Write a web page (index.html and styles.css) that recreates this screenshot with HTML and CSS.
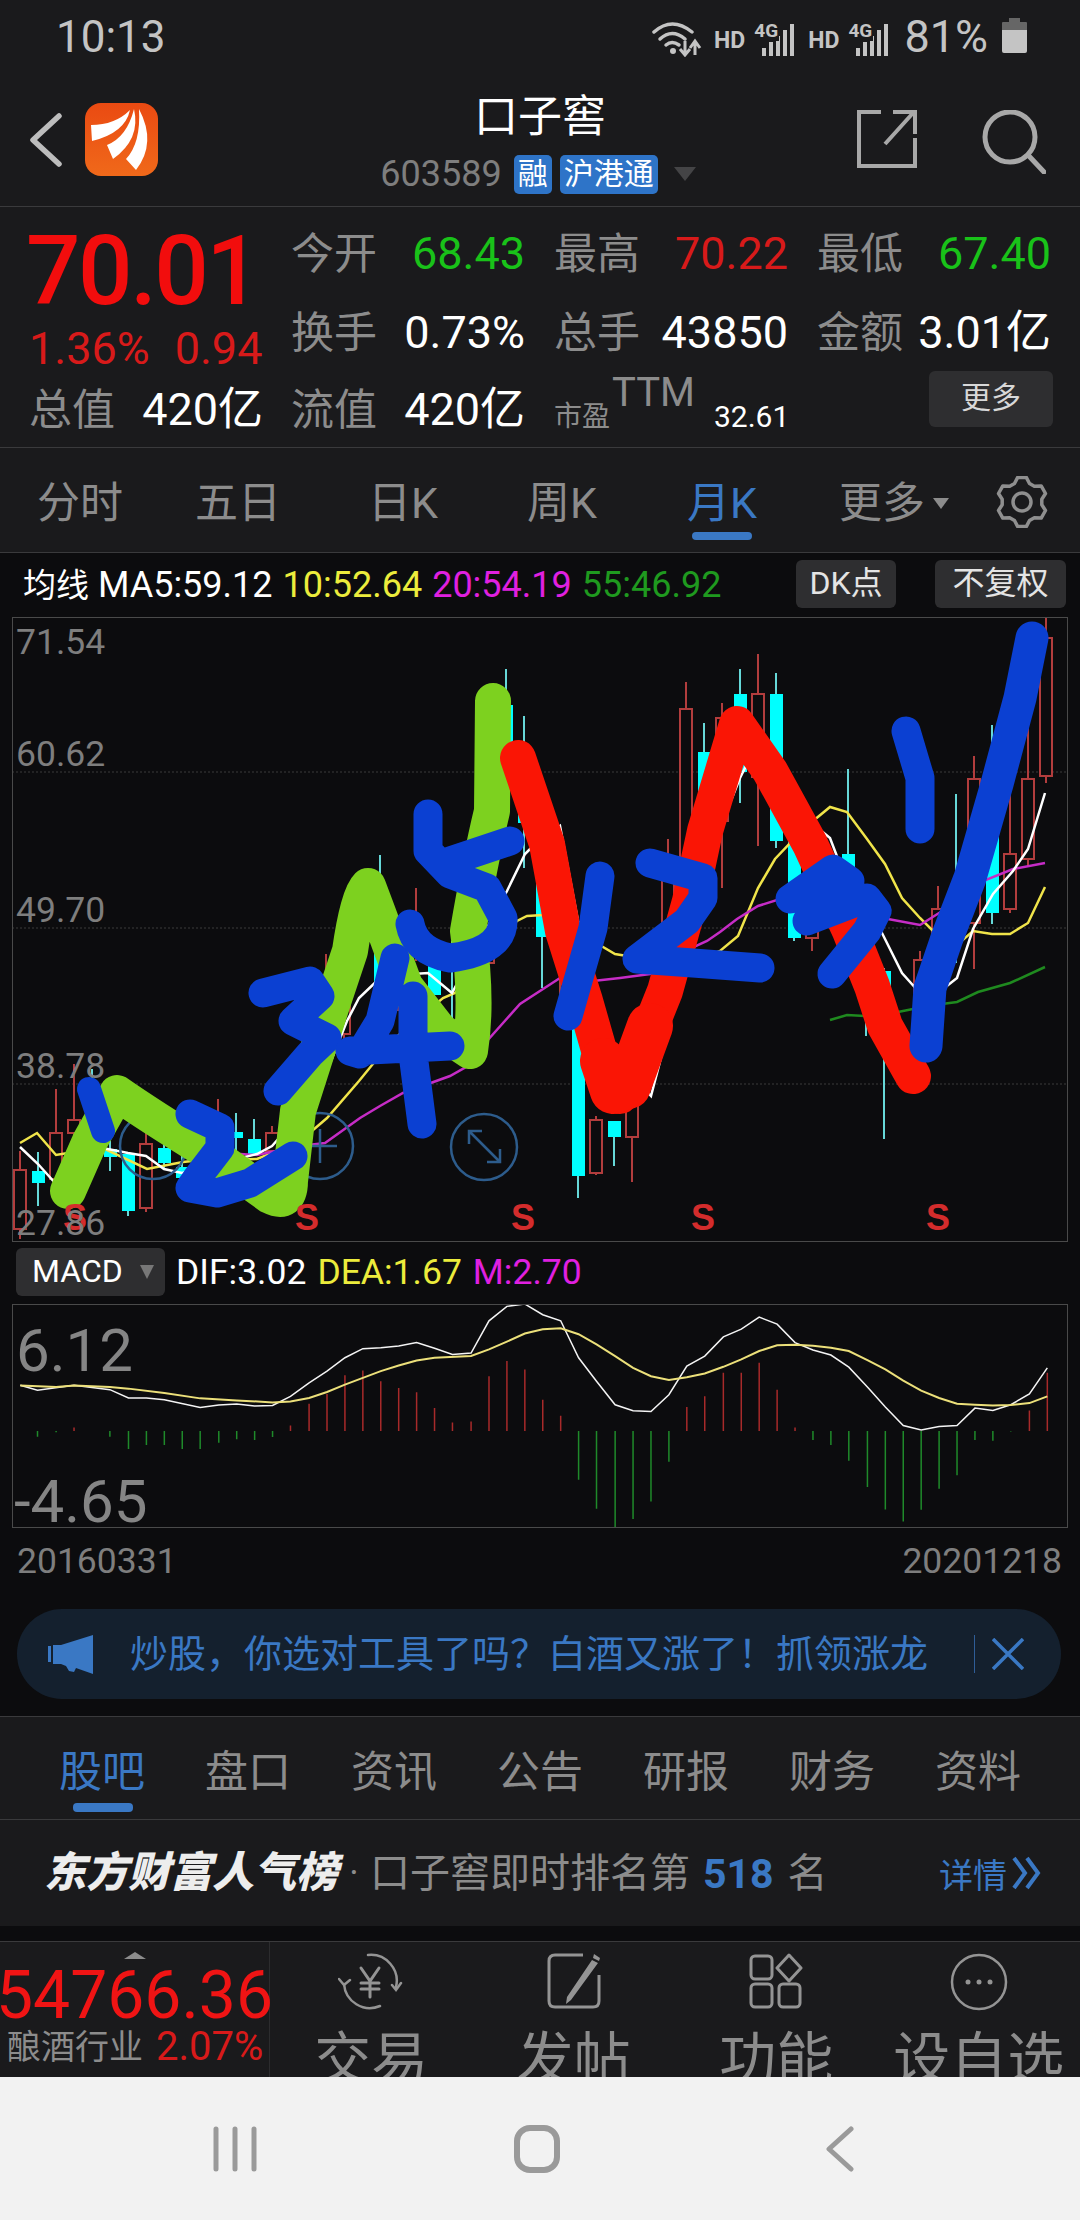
FILE: index.html
```html
<!DOCTYPE html>
<html lang="zh">
<head>
<meta charset="utf-8">
<title>口子窖</title>
<link rel="stylesheet" href="styles.css">
</head>
<body>
<div class="page">
  <div class="status">
    <span class="clock">10:13</span>
    <div class="status-right">
      <svg class="wifi" viewBox="0 0 50 36" width="50" height="36">
        <g fill="none" stroke="#c4c4c4" stroke-width="3.5" stroke-linecap="round">
          <path d="M2 11Q20-5 40 11"/><path d="M8 18Q20 7 33 18"/><path d="M14 24Q20 19 27 24"/>
        </g>
        <circle cx="21" cy="30" r="3" fill="#c4c4c4"/>
        <path d="M33 20V33M28 28L33 34L38 28M43 34V21M38 27L43 20L48 27" fill="none" stroke="#c4c4c4" stroke-width="3"/>
      </svg>
      <span class="hd hd-a">HD</span>
      <div class="signal"><span class="g4">4G</span>
        <svg viewBox="0 0 32 32" width="32" height="32"><path d="M2 32V24M9 32V18M16 32V12M23 32V6M30 32V0" stroke="#c4c4c4" stroke-width="4"/></svg>
      </div>
      <span class="hd hd-b">HD</span>
      <div class="signal"><span class="g4">4G</span>
        <svg viewBox="0 0 32 32" width="32" height="32"><path d="M2 32V24M9 32V18M16 32V12M23 32V6M30 32V0" stroke="#c4c4c4" stroke-width="4"/></svg>
      </div>
      <span class="batt-text">81%</span>
      <svg class="batt" viewBox="0 0 25 35" width="25" height="35">
        <path d="M7 0H18V4H24Q25 4 25 5V12H0V5Q0 4 1 4H7Z" fill="#666"/>
        <path d="M0 12H25V33Q25 35 23 35H2Q0 35 0 33Z" fill="#c4c4c4"/>
      </svg>
    </div>
  </div>

  <header class="header">
    <div class="head-left">
      <svg class="back" viewBox="0 0 32 54" width="32" height="54"><path d="M29 3L3 27L29 51" fill="none" stroke="#bdbdbd" stroke-width="5.5" stroke-linecap="round" stroke-linejoin="round"/></svg>
      <svg class="logo" viewBox="0 0 73 73" width="73" height="73">
        <defs><linearGradient id="lg" x1="0" y1="0" x2="0" y2="1"><stop offset="0" stop-color="#ea4a12"/><stop offset="1" stop-color="#f0691a"/></linearGradient></defs>
        <rect width="73" height="73" rx="16" fill="url(#lg)"/>
        <path d="M6 22Q30 22 45 7Q40 30 7 38ZM22 42Q42 34 49 6Q56 36 28 56ZM41 56Q56 40 54 6Q72 40 51 67Z" fill="#fff"/>
      </svg>
    </div>
    <div class="head-mid">
      <div class="title">口子窖</div>
      <div class="code-row">
        <span class="code">603589</span>
        <span class="tag">融</span>
        <span class="tag">沪港通</span>
        <span class="tri-dim"></span>
      </div>
    </div>
    <div class="head-right">
      <svg viewBox="0 0 60 58" width="60" height="58"><path d="M24 2H2V56H58V28M28 34L56 3M36 2H58V24" fill="none" stroke="#a8a8a8" stroke-width="4"/></svg>
      <svg viewBox="0 0 64 64" width="64" height="64"><circle cx="28" cy="27" r="25" fill="none" stroke="#a8a8a8" stroke-width="5"/><path d="M46 45L62 62" stroke="#a8a8a8" stroke-width="5" stroke-linecap="round"/></svg>
    </div>
  </header>

  <section class="quote">
    <div class="price-col">
      <div class="price">70.01</div>
      <div class="chg"><span>1.36%</span><span>0.94</span></div>
    </div>
    <div class="pair"><span class="k">今开</span><span class="v green">68.43</span></div>
    <div class="pair"><span class="k">最高</span><span class="v red">70.22</span></div>
    <div class="pair"><span class="k">最低</span><span class="v green">67.40</span></div>
    <div class="pair"><span class="k">换手</span><span class="v">0.73%</span></div>
    <div class="pair"><span class="k">总手</span><span class="v">43850</span></div>
    <div class="pair"><span class="k">金额</span><span class="v">3.01亿</span></div>
    <div class="pair"><span class="k">总值</span><span class="v">420亿</span></div>
    <div class="pair"><span class="k">流值</span><span class="v">420亿</span></div>
    <div class="pe"><span class="pe-k">市盈</span><span class="pe-t">TTM</span><span class="pe-v">32.61</span></div>
    <div class="more-btn">更多</div>
  </section>

  <nav class="tabs">
    <span class="tab">分时</span>
    <span class="tab">五日</span>
    <span class="tab">日K</span>
    <span class="tab">周K</span>
    <span class="tab on">月K</span>
    <span class="tab">更多<i class="tri"></i></span>
    <span class="tab">
      <svg viewBox="0 0 52 52" width="52" height="52"><path d="M18.5 7.5L21.7 1.4H30.3L33.5 7.5L38.3 10.2L45.2 9.9L49.5 17.5L45.8 23.2V28.8L49.5 34.5L45.2 42.1L38.3 41.8L33.5 44.5L30.3 50.6H21.7L18.5 44.5L13.7 41.8L6.8 42.1L2.5 34.5L6.2 28.8V23.2L2.5 17.5L6.8 9.9L13.7 10.2Z" fill="none" stroke="#8f8f8f" stroke-width="3.5" stroke-linejoin="round"/><circle cx="26" cy="26" r="9" fill="none" stroke="#8f8f8f" stroke-width="3.5"/></svg>
    </span>
  </nav>

  <div class="ma-row">
    <span class="w"><span class="ma-cn">均线</span> MA5:59.12</span>
    <span class="y">10:52.64</span>
    <span class="m">20:54.19</span>
    <span class="g">55:46.92</span>
    <span class="chip chip-dk">DK点</span>
    <span class="chip chip-fq">不复权</span>
  </div>

  <div class="chart">
    <svg class="chart-svg" viewBox="12 616 1056 625" width="1056" height="625">
      <path class="grid-l" d="M12 771H1068M12 927H1068M12 1083H1068"/>
      <path class="wick-up" d="M20 1150V1238M56 1088V1132M74 1063V1153M146 1130V1211M218 1098V1165M272 1125V1132M308 1063V1125M326 953V1050M344 954V1040M398 965V1010M416 887V960M488 830V905M560 975V1002M596 1115V1174M632 1080V1181M650 980V1062M668 838V1010M686 681V880M722 702V887M758 653V845M812 860V950M920 950V1060M938 885V960M974 755V968M1010 777V912M1028 720V865M1046 615V782"/>
      <path class="wick-dn" d="M38 1151V1205M92 1068V1177M110 1140V1170M128 1210V1215M164 1142V1167M182 1155V1195M236 1112V1150M254 1118V1138M380 854V1010M434 960V1040M452 940V1020M506 668V821M524 715V867M542 840V987M578 1175V1197M614 1136V1165M704 722V900M740 668V802M776 672V847M794 937V940M848 768V955M866 890V1035M884 967V1138M956 793V962M992 724V923"/>
      <g class="c-up">
        <rect x="14" y="1169" width="12" height="59"/><rect x="50" y="1132" width="12" height="46"/><rect x="68" y="1119" width="12" height="13"/><rect x="140" y="1143" width="12" height="64"/><rect x="266" y="1132" width="12" height="18"/><rect x="338" y="993" width="12" height="40"/><rect x="392" y="965" width="12" height="32"/><rect x="482" y="905" width="12" height="57"/><rect x="590" y="1119" width="12" height="53"/><rect x="626" y="1080" width="12" height="56"/><rect x="644" y="1000" width="12" height="47"/><rect x="662" y="870" width="12" height="130"/><rect x="680" y="708" width="12" height="172"/><rect x="716" y="717" width="12" height="103"/><rect x="752" y="693" width="12" height="83"/><rect x="806" y="867" width="12" height="70"/><rect x="914" y="959" width="12" height="93"/><rect x="932" y="908" width="12" height="52"/><rect x="968" y="778" width="12" height="144"/><rect x="1004" y="853" width="12" height="55"/><rect x="1022" y="778" width="12" height="80"/><rect x="1040" y="637" width="12" height="138"/>
      </g>
      <g class="c-dn">
        <rect x="32" y="1170" width="13" height="12"/><rect x="104" y="1148" width="13" height="8"/><rect x="122" y="1153" width="13" height="57"/><rect x="158" y="1147" width="13" height="15"/><rect x="176" y="1166" width="13" height="11"/><rect x="230" y="1131" width="13" height="6"/><rect x="248" y="1138" width="13" height="15"/><rect x="374" y="943" width="13" height="50"/><rect x="428" y="965" width="13" height="29"/><rect x="500" y="704" width="13" height="54"/><rect x="518" y="751" width="13" height="71"/><rect x="536" y="850" width="13" height="86"/><rect x="572" y="920" width="13" height="255"/><rect x="608" y="1120" width="13" height="16"/><rect x="698" y="751" width="13" height="149"/><rect x="734" y="693" width="13" height="78"/><rect x="770" y="693" width="13" height="147"/><rect x="788" y="832" width="13" height="105"/><rect x="842" y="853" width="13" height="97"/><rect x="860" y="900" width="13" height="97"/><rect x="878" y="970" width="13" height="75"/><rect x="986" y="825" width="13" height="87"/>
      </g>
      <polyline class="l-y" points="20,1142 37,1132 56,1154 74,1151 103,1147 147,1168 183,1161 192,1160 257,1158 298,1142 327,1117 359,1080 390,1042 400,1033 443,997 455,992 517,920 527,915 543,914 550,910 598,943 615,953 627,955 713,953 720,950 738,935 758,887 775,858 795,837 813,820 830,806 847,811 867,838 885,863 902,897 920,917 937,934 957,944 973,930 992,933 1010,933 1028,922 1045,886"/>
      <polyline class="l-m" points="240,1153 257,1154 300,1145 325,1142 360,1117 380,1105 403,1092 450,1075 473,1062 487,1040 520,1003 560,977 593,980 620,977 650,973 687,949 707,940 720,931 737,918 758,905 780,898 888,918 920,924 947,907 983,880 1013,868 1045,862"/>
      <polyline class="l-g" points="830,1019 847,1014 865,1015 893,1012 918,1007 942,1003 957,1001 978,991 1010,982 1045,966"/>
      <polyline class="l-w" points="20,1146 38,1163 56,1183 74,1165 103,1147 128,1152 146,1155 164,1168 182,1172 257,1153 272,1145 303,1110 327,1070 347,1020 359,997 382,975 428,972 452,992 507,890 525,853 533,845 560,825 578,920 593,975 615,1055 637,1080 651,1095 668,1030 682,975 693,923 708,867 720,827 740,777 750,757 803,810 813,823 830,837 838,858 882,932 902,972 919,991 943,988 957,977 973,928 993,893 1013,870 1028,848 1045,792"/>
      <g class="circ">
        <circle cx="153" cy="1145" r="33"/><circle cx="320" cy="1145" r="33"/><circle cx="484" cy="1146" r="33"/>
        <path d="M320 1128V1162M303 1145H337"/>
        <path d="M469 1130L500 1161M469 1143V1130H482M500 1148V1161H487"/>
      </g>
      <path class="st-green" d="M68 1190L90 1140L117 1092Q150 1115 207 1150L270 1195Q290 1205 290 1180L298 1110L330 1010L350 950Q358 895 368 885Q385 930 405 985L440 1030L470 1050Q478 1000 468 930Q480 860 492 810L493 700"/>
      <path class="st-red" d="M518 757L547 843L563 930L585 1000L605 1070Q612 1095 620 1095L645 1040L665 990L690 900L705 830L737 723L770 770L810 843L850 930L872 985L885 1025L913 1075"/>
      <path class="st-red-fat" d="M603 1060L613 1090L628 1085L650 1025"/>
      <g class="st-blue">
        <path class="thin" d="M89 1088L103 1130"/>
        <path d="M190 1113L220 1127L220 1147L197 1177L190 1187L217 1192L250 1182L293 1155"/>
        <path d="M263 992L310 980L320 995L293 1020L327 1037L310 1053L278 1090"/>
        <path d="M395 957L380 1020L360 1053L350 1050L450 1045M413 995V1053L422 1123"/>
        <path d="M428 813V850L450 873L487 887L503 917Q505 950 450 957Q415 950 410 923M450 860L510 840"/>
        <path d="M600 875L593 927L568 1015"/>
        <path d="M650 862L703 877V897L687 920L637 958L693 962L760 967"/>
        <path d="M790 898L833 868L850 880L807 920L867 897L877 910L867 930L832 973"/>
        <path d="M906 730L920 777L920 828"/>
        <path class="thick" d="M1032 637L1020 697L997 783L970 877L947 937L930 987L926 1045"/>
      </g>
    </svg>
    <span class="ax ax-1">71.54</span>
    <span class="ax ax-2">60.62</span>
    <span class="ax ax-3">49.70</span>
    <span class="ax ax-4">38.78</span>
    <span class="s s-1">S</span>
    <span class="s s-2">S</span>
    <span class="s s-3">S</span>
    <span class="s s-4">S</span>
    <span class="s s-5">S</span>
    <span class="ax ax-5">27.86</span>
  </div>

  <div class="macd-row">
    <span class="macd-btn">MACD<i class="tri-small"></i></span>
    <span class="w">DIF:3.02</span>
    <span class="y">DEA:1.67</span>
    <span class="m">M:2.70</span>
  </div>

  <div class="macd">
    <svg class="macd-svg" viewBox="18 190 1532 667" preserveAspectRatio="none" width="1056" height="224">
      <path class="bar-r" d="M108 568V558M422 568V552M449 568V487M475 568V458M501 568V402M527 568V388M553 568V420M579 568V440M605 568V453M631 568V500M657 568V543M684 568V540M710 568V405M736 568V360M762 568V385M788 568V475M814 568V523M997 568V497M1023 568V465M1050 568V395M1076 568V395M1102 568V365M1128 568V445M1154 568V558M1494 568V507M1520 568V395"/>
      <path class="bar-g" d="M55 568V585M82 568V572M160 568V585M187 568V622M213 568V610M239 568V610M265 568V622M291 568V622M318 568V603M344 568V593M370 568V595M396 568V586M840 568V713M866 568V800M893 568V857M919 568V830M945 568V778M971 568V660M1180 568V595M1206 568V610M1232 568V657M1259 568V735M1285 568V802M1311 568V838M1337 568V803M1363 568V740M1389 568V700M1415 568V595M1441 568V597M1467 568V570"/>
      <polyline class="m-w" points="30,432 55,447 108,432 160,445 187,470 213,470 239,475 291,498 318,491 344,488 370,494 396,492 422,465 449,425 475,390 501,350 527,323 553,320 579,315 605,305 631,322 657,340 684,336 710,240 736,197 762,190 788,222 814,240 840,350 866,420 893,490 919,508 945,510 971,460 997,375 1023,345 1050,288 1076,265 1102,229 1128,250 1154,305 1180,327 1206,342 1232,378 1259,437 1285,497 1311,552 1337,565 1363,555 1389,552 1415,500 1441,507 1467,490 1494,458 1520,380"/>
      <polyline class="m-y" points="30,433 82,437 108,433 160,437 187,442 239,455 291,471 344,477 396,483 422,480 449,470 475,452 501,430 527,410 553,390 579,373 605,358 631,350 684,345 710,325 736,302 762,278 788,265 814,262 840,280 866,310 893,345 919,380 945,405 971,416 997,408 1023,397 1050,377 1076,355 1102,330 1128,313 1154,311 1180,314 1206,320 1232,330 1259,357 1285,385 1311,418 1337,448 1363,470 1389,487 1415,490 1441,492 1467,491 1494,485 1520,465"/>
    </svg>
    <span class="mv mv-top">6.12</span>
    <span class="mv mv-bot">-4.65</span>
  </div>

  <div class="dates"><span>20160331</span><span>20201218</span></div>

  <div class="banner">
    <svg class="speaker" viewBox="0 0 45 39" width="45" height="39"><path d="M0 11H3V27H0ZM5 10H13L45 0V39L28 33L26 37L21 36L18 31L13 29H5Z" fill="#3a78c4"/></svg>
    <span class="banner-text">炒股，你选对工具了吗？白酒又涨了！抓领涨龙</span>
    <span class="banner-div"></span>
    <svg class="close" viewBox="0 0 32 32" width="32" height="32"><path d="M1 1L31 31M31 1L1 31" stroke="#3a78c4" stroke-width="3.5"/></svg>
  </div>

  <nav class="sub-tabs">
    <span class="stab on">股吧</span><span class="stab">盘口</span><span class="stab">资讯</span><span class="stab">公告</span><span class="stab">研报</span><span class="stab">财务</span><span class="stab">资料</span>
  </nav>

  <div class="rank">
    <span class="rank-brand">东方财富人气榜</span>
    <span class="rank-dot">·</span>
    <span class="rank-text">口子窖即时排名第</span>
    <span class="rank-num">518</span>
    <span class="rank-text">名</span>
    <span class="rank-more">详情<svg viewBox="0 0 32 34" width="32" height="34"><path d="M3 2L14 17L3 32M16 2L27 17L16 32" fill="none" stroke="#3a78c4" stroke-width="4"/></svg></span>
  </div>

  <div class="bottom">
    <div class="ind">
      <i class="tri-up"></i>
      <div class="ind-val">54766.36</div>
      <div class="ind-row"><span class="ind-name">酿酒行业</span><span class="ind-pct">2.07%</span></div>
    </div>
    <div class="nav-item">
      <svg viewBox="0 0 66 58" width="66" height="58"><g fill="none" stroke="#949494" stroke-width="2.5" stroke-linecap="round"><path d="M6 31A26 26 0 0 0 42 53M30 2A26 26 0 0 1 58 34"/><path d="M1 26L6 32L12 27M54 32L58 37L63 30"/><path stroke-width="3" d="M23 15L32 28L41 15M32 28V44M23 30H41M23 36H41"/></g></svg>
      <span>交易</span>
    </div>
    <div class="nav-item">
      <svg viewBox="0 0 54 56" width="54" height="56"><g fill="none" stroke="#949494" stroke-width="3"><path d="M36 2H8Q2 2 2 8V48Q2 54 8 54H46Q52 54 52 48V22"/></g><path d="M47 1L53 5L52 8L46 5ZM45 7L51 10L24 47L19 51L20 44Z" fill="#949494"/></svg>
      <span class="after-56">发帖</span>
    </div>
    <div class="nav-item">
      <svg viewBox="0 0 54 56" width="54" height="56"><g fill="none" stroke="#949494" stroke-width="3"><rect x="2" y="3" width="21" height="23" rx="4"/><path d="M40 2L52 15L40 28L28 15Z" stroke-linejoin="round"/><rect x="2" y="31" width="21" height="23" rx="4"/><rect x="30" y="31" width="21" height="23" rx="4"/></g></svg>
      <span class="after-56">功能</span>
    </div>
    <div class="nav-item">
      <svg viewBox="0 0 58 58" width="58" height="58"><circle cx="29" cy="29" r="27" fill="none" stroke="#949494" stroke-width="2.5"/><circle cx="18" cy="29" r="2.5" fill="#949494"/><circle cx="29" cy="29" r="2.5" fill="#949494"/><circle cx="40" cy="29" r="2.5" fill="#949494"/></svg>
      <span>设自选</span>
    </div>
  </div>

  <div class="sysnav">
    <svg viewBox="0 0 44 46" width="44" height="46"><path d="M3 3V43M22 3V43M41 3V43" stroke="#9a9a9a" stroke-width="5" stroke-linecap="round"/></svg>
    <svg class="sys-home" viewBox="0 0 46 48" width="46" height="48"><rect x="3" y="3" width="40" height="42" rx="13" fill="none" stroke="#9a9a9a" stroke-width="6"/></svg>
    <svg class="sys-back" viewBox="0 0 28 46" width="28" height="46"><path d="M25 3L3 23L25 43" fill="none" stroke="#9a9a9a" stroke-width="5" stroke-linecap="round" stroke-linejoin="round"/></svg>
  </div>
</div>
</body>
</html>
```

FILE: styles.css
```css
* { box-sizing: border-box; }
html, body { margin: 0; padding: 0; background: #1a1a1c; }
body { font-family: Roboto, "Noto Sans CJK SC", sans-serif; }
i { font-style: normal; }
svg { display: block; flex: none; }

.page { width: 1080px; height: 2220px; overflow: hidden; background: #0c0c0e; }

/* status bar */
.status { height: 76px; background: #1a1a1c; display: flex; justify-content: space-between; padding: 11px 0 0 56px; color: #c4c4c4; }
.clock { font-size: 44px; line-height: 52px; }
.status-right { display: flex; align-items: flex-start; padding: 10px 53px 0 0; }
.hd { font-size: 23px; font-weight: 700; line-height: 24px; margin-top: 8px; }
.hd-a { margin-left: 12px; }
.hd-b { margin-left: 13px; }
.signal { position: relative; width: 33px; height: 32px; margin: 3px 0 0 17px; }
.g4 { position: absolute; left: -8px; top: -3px; font-size: 19px; font-weight: 700; line-height: 20px; background: #1a1a1c; padding-right: 1px; }
.batt-text { font-size: 45px; line-height: 44px; margin: -6px 0 0 15px; }
.batt { margin: -3px 0 0 14px; }

/* header */
.header { height: 131px; background: #1a1a1c; border-bottom: 1px solid #3a3a3c; display: grid; grid-template-columns: 1fr auto 1fr; }
.head-left { display: flex; align-items: flex-start; padding: 37px 0 0 30px; gap: 23px; }
.logo { margin-top: -10px; }
.head-mid { display: flex; flex-direction: column; align-items: center; padding-top: 12px; }
.title { font-size: 44px; line-height: 58px; color: #fff; }
.code-row { display: flex; align-items: center; margin-top: 8px; padding-right: 4px; }
.code { font-size: 36px; line-height: 40px; color: #7e7e7e; margin-right: 12px; }
.tag { height: 39px; padding: 0 4px; background: #2e74c8; color: #fff; font-size: 30px; line-height: 38px; border-radius: 5px; margin-right: 8px; }
.tri-dim { width: 0; height: 0; border: 11px solid transparent; border-top: 14px solid #444446; border-bottom: 0; margin-left: 8px; }
.head-right { display: flex; justify-content: flex-end; align-items: flex-start; padding: 34px 34px 0 0; gap: 65px; }

/* quote */
.quote { height: 241px; background: #1a1a1c; border-bottom: 1px solid #3a3a3c; padding: 7px 28px 0 29px; display: grid; grid-template-columns: 262px 263px 263px 1fr; grid-template-rows: 79px 79px 75px; color: #fff; }
.price-col { grid-row: 1 / span 2; display: flex; flex-direction: column; }
.price { font-size: 96px; font-weight: 500; letter-spacing: -2.5px; line-height: 94px; color: #f20d0d; margin: 10px 0 0 -3px; }
.chg { display: flex; gap: 25px; font-size: 45px; line-height: 54px; color: #d81a1a; margin-top: 4px; }
.pair { display: flex; justify-content: space-between; align-items: center; width: 234px; }
.k { font-size: 43px; color: #8c8c8c; line-height: 54px; }
.v { font-size: 45px; line-height: 54px; color: #fff; }
.v.green { color: #19c219; }
.v.red { color: #d81a1a; }
.pe { display: flex; align-items: flex-end; width: 234px; padding-bottom: 14px; }
.pe-k { flex: none; font-size: 28px; line-height: 32px; color: #8c8c8c; width: 58px; white-space: nowrap; }
.pe-t { font-size: 40px; line-height: 40px; color: #8c8c8c; margin-bottom: 20px; margin-right: 19px; }
.pe-v { font-size: 30px; line-height: 32px; color: #fff; }
.more-btn { justify-self: end; align-self: start; width: 124px; height: 56px; margin: -1px -1px 0 0; background: #2e2e30; border-radius: 6px; color: #d8d8d8; font-size: 30px; line-height: 54px; text-align: center; }

/* period tabs */
.tabs { height: 105px; background: #1a1a1c; border-bottom: 1px solid #3a3a3c; display: grid; grid-template-columns: 160px 156px 174px 144px 176px 168px 88px; padding-right: 14px; }
.tab { position: relative; display: flex; justify-content: center; align-items: flex-start; padding-top: 26px; font-size: 43px; line-height: 58px; color: #8c8c8c; }
.tab svg { margin-top: 2px; }
.tab.on { color: #3a78c4; }
.tab.on::after { content: ""; position: absolute; left: 58px; width: 60px; top: 84px; height: 8px; border-radius: 4px; background: #3a78c4; }
.tri { width: 0; height: 0; border: 8px solid transparent; border-top: 11px solid #8c8c8c; border-bottom: 0; margin: 24px 0 0 8px; }

/* MA legend */
.ma-row { height: 64px; display: flex; align-items: flex-start; padding: 8px 14px 0 23px; font-size: 36px; line-height: 48px; }
.ma-row > span { margin-right: 10px; }
.ma-cn { font-size: 33px; }
.w { color: #fff; }
.y { color: #ecec3c; }
.m { color: #e020e0; }
.g { color: #1f9a1f; }
.ma-row > .chip { height: 48px; margin-top: -1px; background: #2e2e30; border-radius: 6px; color: #e4e4e4; font-size: 32px; line-height: 46px; text-align: center; margin-right: 0; }
.ma-row > .chip-dk { width: 100px; margin-left: auto; }
.ma-row > .chip-fq { width: 131px; margin-left: 39px; }

/* price chart */
.chart { position: relative; width: 1056px; height: 625px; margin-left: 12px; border: 1px solid #4a4a4a; overflow: hidden; }
.chart-svg { position: absolute; left: -1px; top: -1px; }
.grid-l { fill: none; stroke: #3a3a3a; stroke-width: 1; stroke-dasharray: 2 2; }
.wick-up { fill: none; stroke: #b23d3d; stroke-width: 2; }
.wick-dn { fill: none; stroke: #66d8d8; stroke-width: 2; }
.c-up rect { fill: #0c0c0e; stroke: #b23d3d; stroke-width: 2; }
.c-dn rect { fill: #0ff; }
.l-y, .l-m, .l-g, .l-w { fill: none; stroke-width: 2.5; stroke-linejoin: miter; }
.l-y { stroke: #f0e44a; }
.l-m { stroke: #c62cc6; }
.l-g { stroke: #1f8a1f; }
.l-w { stroke: #fff; }
.circ { fill: none; stroke: #2d5c8c; stroke-width: 2.5; }
.st-green, .st-red, .st-red-fat, .st-blue { fill: none; stroke-linecap: round; stroke-linejoin: round; }
.st-green { stroke: #7dd11f; stroke-width: 36px; }
.st-red { stroke: #fa1505; stroke-width: 36px; }
.st-red-fat { stroke: #fa1505; stroke-width: 46px; }
.st-blue { stroke: #0b40d2; stroke-width: 29px; }
.st-blue .thin { stroke-width: 24px; }
.st-blue .thick { stroke-width: 33px; }

.ax { position: absolute; left: 3px; font-size: 35.5px; line-height: 34px; color: #7e7e7e; }
.ax-1 { top: 7px; }
.ax-2 { top: 119px; }
.ax-3 { top: 275px; }
.ax-4 { top: 431px; }
.ax-5 { top: 588px; }
.s { position: absolute; top: 582px; font-family: "Liberation Sans", sans-serif; font-size: 36px; font-weight: 700; line-height: 36px; color: #d42c2c; }
.s-1 { left: 50px; }
.s-2 { left: 282px; }
.s-3 { left: 498px; }
.s-4 { left: 678px; }
.s-5 { left: 913px; }

/* MACD */
.macd-row { height: 62px; display: flex; align-items: flex-start; gap: 11px; padding: 6px 0 0 16px; font-size: 35.5px; line-height: 48px; }
.macd-btn { display: flex; width: 149px; height: 48px; padding-left: 16px; background: #2e2e30; border-radius: 6px; color: #fff; font-size: 32px; line-height: 46px; }
.tri-small { width: 0; height: 0; border: 7px solid transparent; border-top: 14px solid #777; border-bottom: 0; margin: 17px 0 0 17px; }
.macd { position: relative; width: 1056px; height: 224px; margin-left: 12px; border: 1px solid #4a4a4a; overflow: hidden; }
.macd-svg { position: absolute; left: -1px; top: -1px; }
.macd-svg * { vector-effect: non-scaling-stroke; fill: none; }
.bar-r { stroke: #a82a2a; stroke-width: 1.5; }
.bar-g { stroke: #1f8a2a; stroke-width: 1.5; }
.m-w { stroke: #f4f4f4; stroke-width: 1.5; }
.m-y { stroke: #ece07a; stroke-width: 2; }
.mv { position: absolute; font-size: 60px; line-height: 58px; color: #858585; }
.mv-top { left: 3px; top: 17px; }
.mv-bot { left: 1px; top: 168px; }

.dates { height: 81px; display: flex; justify-content: space-between; padding: 13px 18px 0 17px; font-size: 35.5px; line-height: 40px; color: #7e7e7e; }

/* banner */
.banner { width: 1044px; height: 90px; margin-left: 17px; border-radius: 45px; background: #14202e; display: flex; align-items: center; padding-left: 31px; }
.banner-text { width: 815px; margin-left: 37px; font-size: 38px; line-height: 50px; color: #3a78c4; white-space: nowrap; }
.banner-div { width: 1px; height: 38px; background: #3a78c4; opacity: .7; margin-left: 29px; }
.close { margin-left: 17px; }

/* sub tabs */
.sub-tabs { margin-top: 17px; height: 104px; background: #1a1a1c; border-top: 1px solid #3a3a3c; border-bottom: 1px solid #3a3a3c; display: grid; grid-template-columns: repeat(7, 146px); padding-left: 29px; }
.stab { position: relative; text-align: center; padding-top: 26px; font-size: 43px; line-height: 58px; color: #8c8c8c; }
.stab.on { color: #3a78c4; }
.stab.on::after { content: ""; position: absolute; left: 44px; width: 60px; top: 86px; height: 9px; border-radius: 4px; background: #3a78c4; }

/* rank */
.rank { height: 106px; background: #1a1a1c; display: flex; align-items: center; padding: 0 37px 0 44px; }
.rank-brand { font-size: 42px; font-weight: 900; font-style: italic; line-height: 54px; color: #ededed; }
.rank-dot { width: 32px; text-align: center; font-size: 36px; color: #8c8c8c; }
.rank-text { font-size: 40px; line-height: 54px; color: #8c8c8c; position: relative; top: 1px; }
.rank-num { margin: 0 14px 0 13px; font-size: 41px; font-weight: 700; line-height: 54px; color: #3a78c4; position: relative; top: 1px; }
.rank-more { display: flex; align-items: center; gap: 4px; margin-left: auto; font-size: 34px; color: #3a78c4; }

/* bottom bar */
.bottom { margin-top: 15px; height: 136px; background: #1a1a1c; border-top: 1px solid #3a3a3c; display: grid; grid-template-columns: 270px repeat(4, 1fr); overflow: hidden; }
.ind { border-right: 1px solid #2c2c2e; display: flex; flex-direction: column; align-items: center; padding-top: 10px; }
.tri-up { width: 0; height: 0; border: 11px solid transparent; border-bottom: 7px solid #8c8c8c; border-top: 0; }
.ind-val { font-size: 66px; line-height: 60px; margin-top: 7px; color: #f01414; white-space: nowrap; }
.ind-row { display: flex; align-items: center; align-self: stretch; gap: 13px; padding-left: 7px; margin-top: 0; }
.ind-name { font-size: 34px; line-height: 42px; color: #8c8c8c; }
.ind-pct { font-size: 40px; line-height: 42px; color: #d81a1a; }
.nav-item { display: flex; flex-direction: column; align-items: center; padding-top: 11px; font-size: 57px; line-height: 72px; color: #8c8c8c; white-space: nowrap; }
.nav-item span { margin-top: 13px; }
.nav-item span.after-56 { margin-top: 15px; }

/* system nav */
.sysnav { height: 144px; background: #f2f2f2; display: flex; align-items: center; padding-left: 213px; gap: 256px; }
.sys-home { margin-left: 1px; }
.sys-back { margin-left: 10px; }
```
